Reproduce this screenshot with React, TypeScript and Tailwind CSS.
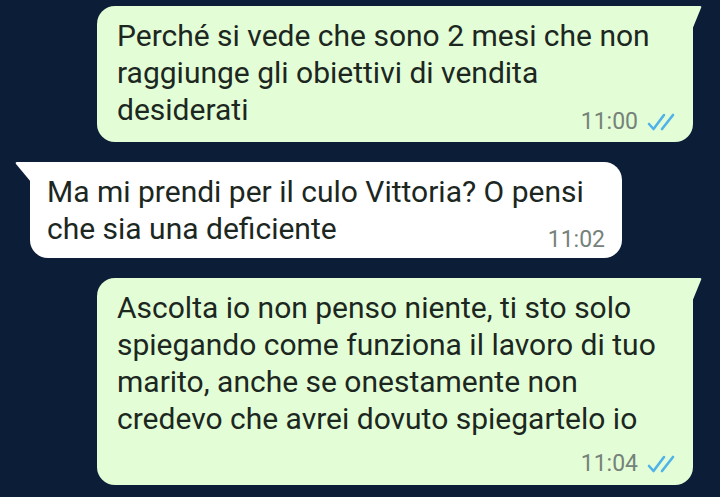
const font = { fontFamily: "Roboto, 'Noto Sans', sans-serif" };

function Ticks() {
  return (
    <svg width="32" height="20" viewBox="0 0 32 20" fill="none" className="text-[#4fb3ea]">
      <path d="M3 12 L7.5 17 L18 3" stroke="currentColor" strokeWidth="2.6" strokeLinecap="round" strokeLinejoin="round" />
      <path d="M16 17 L27 3" stroke="currentColor" strokeWidth="2.6" strokeLinecap="round" />
    </svg>
  );
}

function Outgoing({
  lines,
  time,
  timeClass,
}: {
  lines: string;
  time: string;
  timeClass: string;
}) {
  return (
    <div className="self-end mr-[27px] relative w-[596px] bg-[#e3fdd6] rounded-[18px] rounded-tr-none pl-5 pr-[15px] pt-[11px]">
      <svg className="absolute -right-[9px] top-0" width="10" height="24" viewBox="0 0 10 24">
        <path d="M0 0 H8 Q10 0 9 2 L0 24 Z" fill="#e3fdd6" />
      </svg>
      <p className="text-[30px] leading-[37px] text-[#1c271f] whitespace-pre-line">{lines}</p>
      <div className={`flex items-center justify-end gap-2 ${timeClass}`}>
        <span className="text-[23px] leading-[26px] text-[#76827a]">{time}</span>
        <Ticks />
      </div>
    </div>
  );
}

export default function App() {
  return (
    <div style={font} className="w-[720px] h-[497px] overflow-hidden bg-[#0c1e37] flex flex-col gap-5 pt-[6px]">
      <Outgoing
        lines={"Perché si vede che sono 2 mesi che non\nraggiunge gli obiettivi di vendita\ndesiderati"}
        time="11:00"
        timeClass="-mt-[19px] pb-[7px]"
      />

      <div className="self-start ml-[30px] relative w-[592px] bg-white rounded-[18px] rounded-tl-none pl-[17px] pr-[17px] pt-[11px]">
        <svg className="absolute -left-[15px] top-0" width="16" height="20" viewBox="0 0 16 20">
          <path d="M16 0 H2 Q0 0 1 2 L16 20 Z" fill="#ffffff" />
        </svg>
        <p className="text-[30px] leading-[37px] text-[#1c271f] whitespace-pre-line">
          {"Ma mi prendi per il culo Vittoria? O pensi\nche sia una deficiente"}
        </p>
        <div className="flex justify-end -mt-5 pb-[5px]">
          <span className="text-[23px] leading-[26px] text-[#76827a]">11:02</span>
        </div>
      </div>

      <Outgoing
        lines={"Ascolta io non penso niente, ti sto solo\nspiegando come funziona il lavoro di tuo\nmarito, anche se onestamente non\ncredevo che avrei dovuto spiegartelo io"}
        time="11:04"
        timeClass="mt-[14px] pb-2"
      />
    </div>
  );
}
